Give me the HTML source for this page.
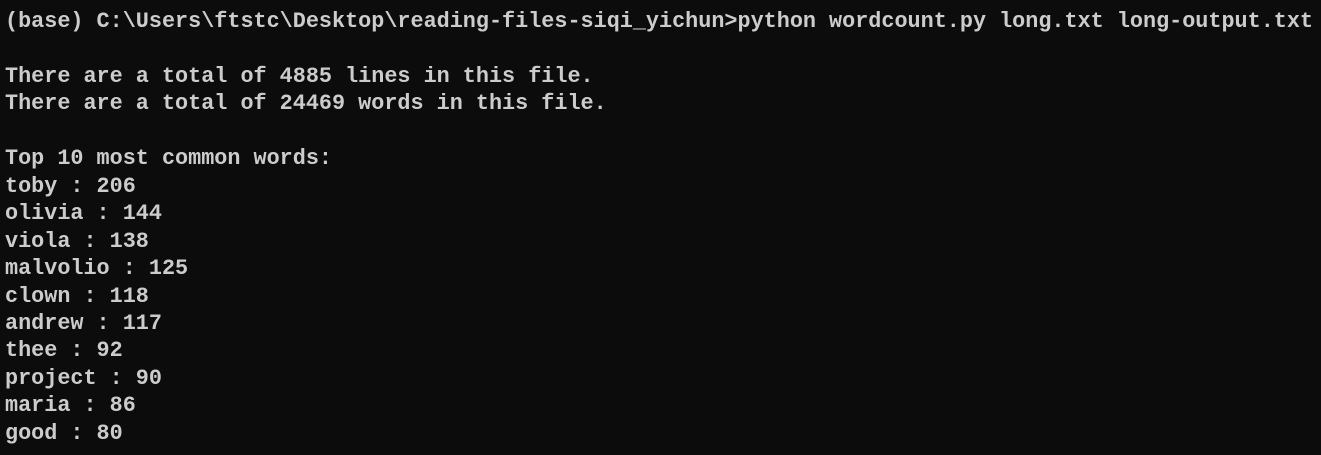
<!DOCTYPE html>
<html><head><meta charset="utf-8"><style>
html,body{margin:0;padding:0;background:#0c0c0c;width:1321px;height:455px;overflow:hidden}
pre{margin:0;position:absolute;left:5px;top:8px;font-family:"Liberation Mono",monospace;font-size:21.8px;line-height:27.45px;color:#cccccc;font-weight:bold;letter-spacing:0}
</style></head><body>
<pre>(base) C:\Users\ftstc\Desktop\reading-files-siqi_yichun>python wordcount.py long.txt long-output.txt

There are a total of 4885 lines in this file.
There are a total of 24469 words in this file.

Top 10 most common words:
toby : 206
olivia : 144
viola : 138
malvolio : 125
clown : 118
andrew : 117
thee : 92
project : 90
maria : 86
good : 80</pre>
</body></html>
